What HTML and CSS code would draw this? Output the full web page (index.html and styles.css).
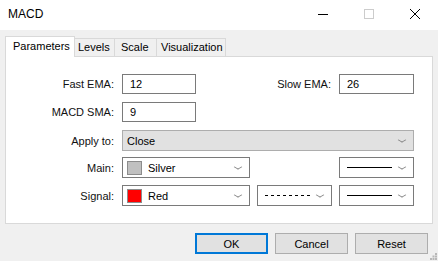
FILE: index.html
```html
<!DOCTYPE html>
<html>
<head>
<meta charset="utf-8">
<link rel="stylesheet" href="styles.css">
</head>
<body>
<div class="window">
  <div class="titlebar">
    <span class="title">MACD</span>
    <div class="controls">
      <span class="ctl"><svg width="10" height="10" viewBox="0 0 10 10"><path d="M0 5.5H10" stroke="#000" stroke-width="1"/></svg></span>
      <span class="ctl"><svg width="10" height="10" viewBox="0 0 10 10"><rect x="0.5" y="0.5" width="9" height="9" fill="none" stroke="#cccccc" stroke-width="1"/></svg></span>
      <span class="ctl"><svg width="10" height="10" viewBox="0 0 10 10"><path d="M0 0L10 10M10 0L0 10" stroke="#000" stroke-width="1"/></svg></span>
    </div>
  </div>
  <div class="content">
    <div class="tabs">
      <div class="tab active t-params">Parameters</div>
      <div class="tab t-levels">Levels</div>
      <div class="tab t-scale">Scale</div>
      <div class="tab t-vis">Visualization</div>
    </div>
    <div class="panel">
      <div class="row r1">
        <label class="lbl">Fast EMA:</label>
        <div class="input w74">12</div>
        <label class="lbl c3">Slow EMA:</label>
        <div class="input c4">26</div>
      </div>
      <div class="row r2">
        <label class="lbl">MACD SMA:</label>
        <div class="input w74">9</div>
      </div>
      <div class="row r3">
        <label class="lbl">Apply to:</label>
        <div class="combo grey span3">Close<span class="chev"></span></div>
      </div>
      <div class="row r4">
        <label class="lbl">Main:</label>
        <div class="combo c2"><span class="sw silver"></span>Silver<span class="chev"></span></div>
        <div class="combo c4"><span class="line solid"></span><span class="chev"></span></div>
      </div>
      <div class="row r5">
        <label class="lbl">Signal:</label>
        <div class="combo c2"><span class="sw red"></span>Red<span class="chev"></span></div>
        <div class="combo c3"><span class="line dashed"></span><span class="chev"></span></div>
        <div class="combo c4"><span class="line solid"></span><span class="chev"></span></div>
      </div>
    </div>
    <div class="buttons">
      <button class="btn default">OK</button>
      <button class="btn">Cancel</button>
      <button class="btn">Reset</button>
    </div>
    <div class="grip">
      <svg width="7" height="7" viewBox="0 0 7 7" fill="#b8b8b8">
        <rect x="5" y="0" width="2" height="2"/>
        <rect x="2.5" y="2.5" width="2" height="2"/><rect x="5" y="2.5" width="2" height="2"/>
        <rect x="0" y="5" width="2" height="2"/><rect x="2.5" y="5" width="2" height="2"/><rect x="5" y="5" width="2" height="2"/>
      </svg>
    </div>
  </div>
</div>
</body>
</html>
```

FILE: styles.css
```css
* { box-sizing: border-box; }
html, body { margin: 0; padding: 0; }
body {
  width: 438px;
  height: 261px;
  overflow: hidden;
  background: #f0f0f0;
  font-family: "Liberation Sans", Arial, sans-serif;
  font-size: 11px;
  color: #000;
}
.window { position: relative; width: 438px; height: 261px; }
.titlebar {
  height: 30px;
  background: #fff;
  display: flex;
  align-items: center;
  justify-content: space-between;
}
.title { font-size: 12px; padding-left: 8px; margin-top: -2px; }
.controls { display: flex; height: 100%; }
.ctl {
  width: 46px;
  display: flex;
  align-items: center;
  justify-content: center;
  margin-top: -2px;
}
.content { padding: 6px 6px 0 5px; }
.tabs { display: flex; align-items: flex-end; height: 20px; position: relative; z-index: 1; }
.tab {
  height: 18px;
  border: 1px solid #d9d9d9;
  border-bottom: none;
  border-left: none;
  background: #f0f0f0;
  line-height: 17px;
  white-space: nowrap;
}
.tab.active {
  height: 21px;
  background: #fff;
  border-left: 1px solid #d9d9d9;
  line-height: 18px;
  margin-bottom: -1px;
}
.t-params { width: 70px; padding-left: 7px; }
.t-levels { width: 40px; padding-left: 3px; }
.t-scale { width: 42px; padding-left: 6px; }
.t-vis { width: 69px; padding-left: 4px; }
.panel {
  width: 428px;
  height: 168px;
  background: #fff;
  border: 1px solid #d9d9d9;
  padding: 17px 0 0 1px;
  display: flex;
  flex-direction: column;
}
.row {
  display: grid;
  grid-template-columns: 108px 128px 75px 75px;
  column-gap: 7px;
  align-items: center;
}
.r2 { margin-top: 8px; }
.r3 { margin-top: 8px; }
.r4 { margin-top: 6px; }
.r5 { margin-top: 7px; }
.lbl { text-align: right; padding-right: 1px; color: #111; }
.c2 { grid-column: 2; }
.c3 { grid-column: 3; }
.c4 { grid-column: 4; }
.span3 { grid-column: 2 / 5; }
.input {
  height: 20px;
  border: 1px solid #7a7a7a;
  background: #fff;
  padding-left: 7px;
  line-height: 18px;
}
.w74 { width: 74px; grid-column: 2; }
.combo {
  position: relative;
  height: 21px;
  border: 1px solid #7a7a7a;
  background: #fff;
  display: flex;
  align-items: center;
  padding-left: 4px;
}
.combo.grey {
  background: #e1e1e1;
  border-color: #adadad;
  padding-left: 4px;
}
.chev {
  position: absolute;
  right: 8px;
  top: 6px;
  width: 6px;
  height: 6px;
  border-right: 1px solid #808080;
  border-bottom: 1px solid #808080;
  transform: scaleY(0.6) rotate(45deg);
}
.sw {
  width: 15px;
  height: 14px;
  border: 1px solid #8c8c8c;
  margin-right: 6px;
}
.silver { background: #c0c0c0; }
.red { background: #ff0000; }
.line { display: block; width: 45px; height: 1px; margin-left: 3px; }
.solid { background: #000; }
.dashed { background: repeating-linear-gradient(90deg, #000 0 3px, transparent 3px 6px); }
.buttons {
  display: flex;
  justify-content: flex-end;
  gap: 7px;
  margin-top: 9px;
  padding-right: 4px;
}
.btn {
  width: 73px;
  height: 21px;
  background: #e1e1e1;
  border: 1px solid #adadad;
  font-family: inherit;
  font-size: 11px;
  color: #000;
  padding: 0;
}
.btn.default { border: 2px solid #0078d7; width: 73px; }
.grip { position: absolute; right: 1px; bottom: 1px; line-height: 0; }
```
